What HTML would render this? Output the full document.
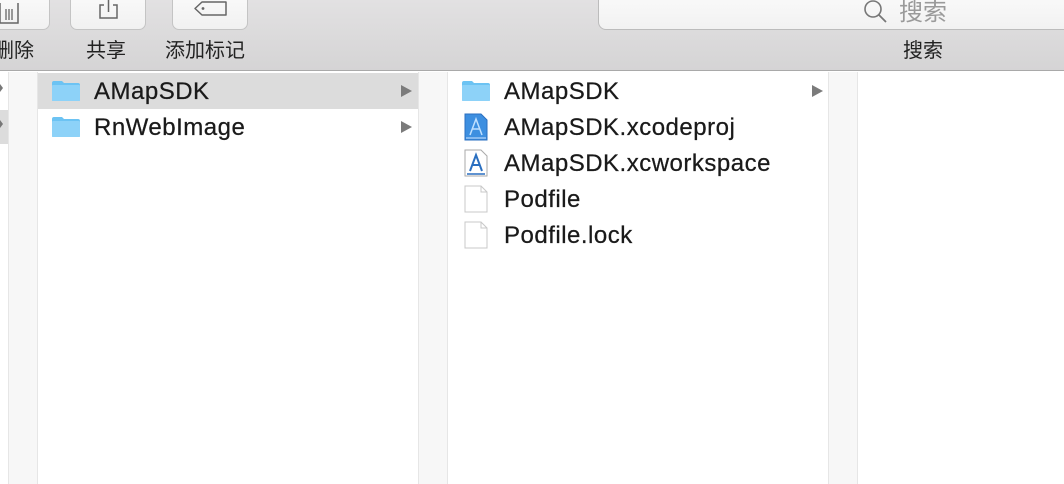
<!DOCTYPE html>
<html><head><meta charset="utf-8"><style>
*{margin:0;padding:0;box-sizing:border-box}
body{width:1064px;height:484px;overflow:hidden;background:#fff;font-family:"Liberation Sans","Noto Sans CJK SC",sans-serif;position:relative}
.tb{position:absolute;left:0;top:0;width:1064px;height:71px;background:linear-gradient(#e2e1e2,#d5d4d5);border-bottom:1px solid #a9a9a9}
.btn{position:absolute;top:-12px;height:42px;background:linear-gradient(#fbfbfb,#f1f1f1);border:1px solid #c4c4c4;border-radius:7px}
.lbl{position:absolute;top:34px;font-size:20px;color:#222;white-space:nowrap}
.search{position:absolute;left:598px;top:-12px;width:500px;height:42px;background:linear-gradient(#fbfbfb,#f2f2f2);border:1px solid #bcbcbc;border-radius:8px}
.v{position:absolute;top:72px;bottom:0}
.row{position:absolute;height:36px;left:0;right:0;font-size:24px;letter-spacing:0.5px;color:#1a1a1a;line-height:37px;-webkit-text-stroke:0.25px #1a1a1a}
.row span{position:absolute}
.fold{position:absolute;width:30px;height:22px;top:7px}
.arr{position:absolute;width:0;height:0;border-top:6px solid transparent;border-bottom:6px solid transparent;border-left:11px solid #7b7b7b;top:12px}
</style></head><body>
<div class="tb">
  <div class="btn" style="left:-20px;width:70px"><svg style="position:absolute;left:16px;top:10px" width="24" height="30" viewBox="0 0 24 30"><path d="M3 4v20h18V4" fill="none" stroke="#666" stroke-width="1.5"/><path d="M9 10v11M12 10v11M15 10v11" stroke="#666" stroke-width="1.3"/></svg></div>
  <div class="btn" style="left:70px;width:76px"><svg style="position:absolute;left:26px;top:8px" width="24" height="24" viewBox="0 0 24 24"><path d="M7 8H3v13h17V8h-4M11.5 2v13" fill="none" stroke="#666" stroke-width="1.5"/></svg></div>
  <div class="btn" style="left:172px;width:76px"><svg style="position:absolute;left:20px;top:10px" width="36" height="20" viewBox="0 0 36 20"><path d="M9 3h24v13H9L2 9.5z" fill="none" stroke="#666" stroke-width="1.5" stroke-linejoin="round"/><circle cx="10" cy="9.5" r="1.4" fill="#666"/></svg></div>
  <div class="lbl" style="left:-6px">删除</div>
  <div class="lbl" style="left:86px">共享</div>
  <div class="lbl" style="left:165px">添加标记</div>
  <div class="search"><svg style="position:absolute;left:264px;top:10px" width="26" height="26" viewBox="0 0 26 26"><circle cx="10" cy="10" r="8" fill="none" stroke="#777" stroke-width="1.6"/><path d="M16 16l7 7" stroke="#777" stroke-width="1.8"/></svg><span style="position:absolute;left:300px;top:3px;font-size:24px;color:#9a9a9a">搜索</span></div>
  <div class="lbl" style="left:903px">搜索</div>
</div>
<div class="v" style="left:0;width:8px;background:#fff"><div style="position:absolute;top:38px;height:34px;width:8px;background:#dcdcdc"></div>
<div style="position:absolute;left:0;top:12px;border-top:4px solid transparent;border-bottom:4px solid transparent;border-left:3px solid #777"></div>
<div style="position:absolute;left:0;top:48px;border-top:4px solid transparent;border-bottom:4px solid transparent;border-left:3px solid #777"></div></div>
<div class="v" style="left:8px;width:30px;background:#f7f7f7;border-left:1px solid #e6e6e6;border-right:1px solid #e6e6e6"></div>
<div class="v" style="left:38px;width:381px">
  <div class="row" style="top:1px;background:#dcdcdc"><svg class="fold" style="left:13px" viewBox="0 0 30 22"><path d="M1 3q0-2 2-2h8l2 2h14q2 0 2 2v15q0 1-1 1H2q-1 0-1-1z" fill="#6cc3f3"/><rect x="1" y="5" width="28" height="16" rx="1" fill="#8dd2f8"/></svg><span style="left:56px">AMapSDK</span><div class="arr" style="left:363px"></div></div>
  <div class="row" style="top:37px"><svg class="fold" style="left:13px" viewBox="0 0 30 22"><path d="M1 3q0-2 2-2h8l2 2h14q2 0 2 2v15q0 1-1 1H2q-1 0-1-1z" fill="#6cc3f3"/><rect x="1" y="5" width="28" height="16" rx="1" fill="#8dd2f8"/></svg><span style="left:56px">RnWebImage</span><div class="arr" style="left:363px"></div></div>
</div>
<div class="v" style="left:418px;width:30px;background:#f7f7f7;border-left:1px solid #e6e6e6;border-right:1px solid #e6e6e6"></div>
<div class="v" style="left:448px;width:381px">
  <div class="row" style="top:1px"><svg class="fold" style="left:13px" viewBox="0 0 30 22"><path d="M1 3q0-2 2-2h8l2 2h14q2 0 2 2v15q0 1-1 1H2q-1 0-1-1z" fill="#6cc3f3"/><rect x="1" y="5" width="28" height="16" rx="1" fill="#8dd2f8"/></svg><span style="left:56px">AMapSDK</span><div class="arr" style="left:364px"></div></div>
  <div class="row" style="top:37px"><svg style="position:absolute;left:16px;top:4px" width="24" height="28" viewBox="0 0 24 28"><path d="M1 1h16l6 6v20H1z" fill="#3d8fe0" stroke="#2a6fc0"/><path d="M6 22L12 6l6 16M8 16h8" fill="none" stroke="#bfe0ff" stroke-width="1.5"/><path d="M2 25h20" stroke="#d0e6ff"/></svg><span style="left:56px">AMapSDK.xcodeproj</span></div>
  <div class="row" style="top:73px"><svg style="position:absolute;left:16px;top:4px" width="24" height="28" viewBox="0 0 24 28"><path d="M1 1h16l6 6v20H1z" fill="#fff" stroke="#aaa"/><path d="M6 22L12 6l6 16M8 16h8" fill="none" stroke="#2a6fc0" stroke-width="2"/><path d="M3 25h18" stroke="#2a6fc0" stroke-width="1.5"/></svg><span style="left:56px">AMapSDK.xcworkspace</span></div>
  <div class="row" style="top:109px"><svg style="position:absolute;left:16px;top:4px" width="24" height="28" viewBox="0 0 24 28"><path d="M1 1h16l6 6v20H1z M17 1v6h6" fill="#fff" stroke="#c8c8c8"/></svg><span style="left:56px">Podfile</span></div>
  <div class="row" style="top:145px"><svg style="position:absolute;left:16px;top:4px" width="24" height="28" viewBox="0 0 24 28"><path d="M1 1h16l6 6v20H1z M17 1v6h6" fill="#fff" stroke="#c8c8c8"/></svg><span style="left:56px">Podfile.lock</span></div>
</div>
<div class="v" style="left:828px;width:30px;background:#f7f7f7;border-left:1px solid #e6e6e6;border-right:1px solid #e6e6e6"></div>
</body></html>
